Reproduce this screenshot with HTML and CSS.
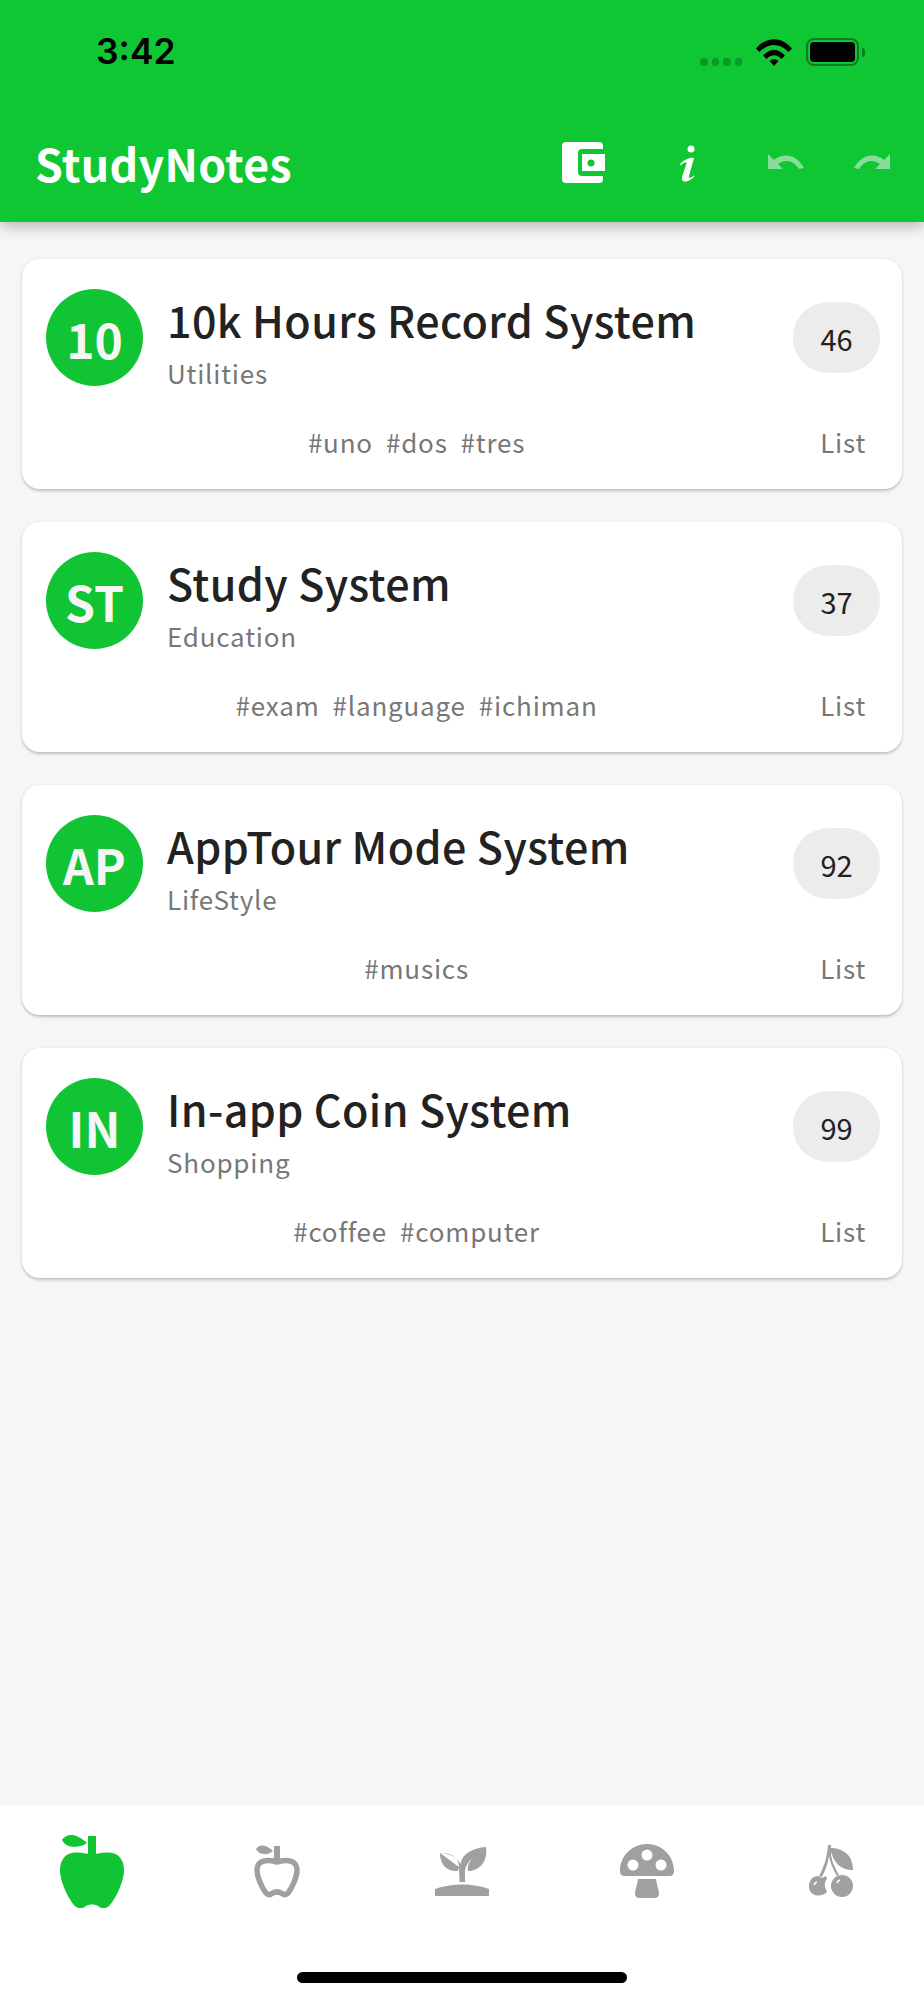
FILE: index.html
```html
<!DOCTYPE html>
<html lang="en">
<head>
<meta charset="utf-8">
<title>StudyNotes</title>
<link rel="stylesheet" href="styles.css">
</head>
<body>
<div class="app">
  <header class="header">
    <div class="status">
      <span class="time">3:42</span>
      <div class="status-icons">
        <div class="signal"><i></i><i></i><i></i><i></i></div>
        <svg class="wifi" viewBox="0 0 36 27"><path d="M0 9.5 C10 -3 26 -3 36 9.5 L32.5 13 C24 3.5 12 3.5 3.5 13Z M7 16.5 C13 9 23 9 29 16.5 L25.5 20 C21 15 15 15 10.5 20Z M13.5 22 C16 19.5 20 19.5 22.5 22 L18 27Z"/></svg>
        <div class="battery"><div class="battery-fill"></div></div>
        <div class="battery-tip"></div>
      </div>
    </div>
    <div class="toolbar">
      <h1 class="brand">StudyNotes</h1>
      <div class="tools">
        <svg class="tool-wallet" viewBox="0 0 43 41"><rect width="41" height="41" rx="4" fill="#fff"/><path d="M20 7 H43 V34 H20 a4 4 0 0 1 -4 -4 V11 a4 4 0 0 1 4 -4Z" fill="#0fc733"/><rect x="20" y="12" width="23" height="17" fill="#fff"/><circle cx="29" cy="21" r="3.5" fill="#0fc733"/></svg>
        <svg class="tool-info" viewBox="0 0 16 37"><circle cx="11" cy="4" r="3.5" fill="#fff"/><path d="M0 19 C4 15 10 12 14 13 L9 31 C8.500 33 9.500 33.500 11 32.500 L14 30.500 L14.500 31.500 C11 35 7 37 4.500 36.500 C1.500 36 1.500 33.500 2.500 30.500 L6.500 18.500 C7 16.500 5 17 .5 20.500Z" fill="#fff"/></svg>
        <svg class="tool-arrow" viewBox="0 0 36 15"><path d="M0 0 L6 6 C14 -1 28 -1 36 14 L31 15 C25 6 17 5 10 10 L15 15 L0 15Z"/></svg>
        <svg class="tool-arrow tool-redo" viewBox="0 0 36 15"><path d="M0 0 L6 6 C14 -1 28 -1 36 14 L31 15 C25 6 17 5 10 10 L15 15 L0 15Z"/></svg>
      </div>
    </div>
  </header>

  <main class="list">
    <article class="card">
      <div class="card-top">
        <div class="avatar">10</div>
        <div class="titles"><h2 class="title">10k Hours Record System</h2><p class="sub">Utilities</p></div>
        <div class="badge">46</div>
      </div>
      <div class="card-bottom">
        <div class="tags"><span>#uno</span><span>#dos</span><span>#tres</span></div>
        <span class="kind">List</span>
      </div>
    </article>
    <article class="card">
      <div class="card-top">
        <div class="avatar">ST</div>
        <div class="titles"><h2 class="title">Study System</h2><p class="sub">Education</p></div>
        <div class="badge">37</div>
      </div>
      <div class="card-bottom">
        <div class="tags"><span>#exam</span><span>#language</span><span>#ichiman</span></div>
        <span class="kind">List</span>
      </div>
    </article>
    <article class="card">
      <div class="card-top">
        <div class="avatar">AP</div>
        <div class="titles"><h2 class="title">AppTour Mode System</h2><p class="sub">LifeStyle</p></div>
        <div class="badge">92</div>
      </div>
      <div class="card-bottom">
        <div class="tags"><span>#musics</span></div>
        <span class="kind">List</span>
      </div>
    </article>
    <article class="card">
      <div class="card-top">
        <div class="avatar">IN</div>
        <div class="titles"><h2 class="title">In-app Coin System</h2><p class="sub">Shopping</p></div>
        <div class="badge">99</div>
      </div>
      <div class="card-bottom">
        <div class="tags"><span>#coffee</span><span>#computer</span></div>
        <span class="kind">List</span>
      </div>
    </article>
  </main>

  <footer class="tabbar">
    <nav class="tabs">
      <div class="tab">
        <svg class="ic-apple" viewBox="0 0 64 74"><path class="active" d="M32 21 C38 19 46 18 52 19 C60 20 64 28 64 36 C64 48 55 66 49 72 C46 75 41 75 38 72 C35 70 29 70 26 72 C23 75 18 75 15 72 C9 66 0 48 0 36 C0 28 4 20 12 19 C18 18 26 19 32 21Z M28 2 H36 V22 H28Z M2 6 C7 -1 16 -1 27 9 C18 15 6 14 2 6Z"/></svg>
      </div>
      <div class="tab">
        <svg class="ic-apple-line" viewBox="0 0 46 53"><path class="line" d="M23 17 C27 16 32 15 36 16 C41 17 43 21 43 25 C43 32 38 43 34 48 C32 50 30 50 28 48.500 C25 46.500 21 46.500 18 48.500 C16 50 14 50 12 48 C8 43 3 32 3 25 C3 21 5 17 10 16 C14 15 19 16 23 17Z"/><path class="fill" d="M20 1 H26 V17 H20Z M2 4 C5 -1 12 -1 19 6 C13 11 5 10 2 4Z"/></svg>
      </div>
      <div class="tab">
        <svg class="ic-sprout" viewBox="0 0 54 49"><path class="fill" d="M0 49 V42 C16 36 38 36 54 42 V49Z M5 6 C16 5 24 11 24 20 L24.500 35 H30 L30 24 C31 18 34 14 38 11 C34 15 32 19 33 24 C45 24 53 14 51 0 C37 1 27 7 25.500 17 C22 11 15 6 5 6Z M5 6 C5 18 12 25 23 24 L24 20Z"/></svg>
      </div>
      <div class="tab">
        <svg class="ic-mushroom" viewBox="0 0 54 54"><path class="fill" d="M0 27 C0 12 12 0 27 0 C42 0 54 12 54 27 V28 C54 30 52 32 50 32 H4 C2 32 0 30 0 28Z M18 35 H36 C37 42 39 46 39 50 C39 52 37 54 35 54 H19 C17 54 15 52 15 50 C15 46 17 42 18 35Z"/><circle class="hole" cx="27" cy="11" r="5.500"/><circle class="hole" cx="13" cy="21" r="5.500"/><circle class="hole" cx="41" cy="21" r="5.500"/></svg>
      </div>
      <div class="tab">
        <svg class="ic-cherry" viewBox="0 0 44 52"><path class="fill" d="M19 0 H22 L22 4 C21 14 26 23 30 30 L28 31 C24 24 21 18 20 11 C19 19 16 25 13 32 L10 31 C14 24 18 14 19 0Z M21 3 C32 3 44 8 44 25 C32 25 24 18 21 3Z"/><circle class="fill" cx="33" cy="41" r="11"/><path class="fill" d="M9 31 L13 33 L17 31 L18 34 C15 37 15 41 18 47 C14 52 0 53 0 41 C0 35 4 31 9 31Z"/><path class="hole-line" d="M28 38 C28.500 36.500 29.500 35.500 31 35"/><path class="hole-line" d="M5 40 C5.500 38.500 6.500 37.500 8 37"/></svg>
      </div>
    </nav>
    <div class="home-row"><div class="home"></div></div>
  </footer>
</div>
</body>
</html>
```
FILE: styles.css
```css
* { box-sizing: border-box; }
html, body { margin: 0; padding: 0; }
body { width: 924px; height: 2000px; overflow: hidden; background: #f6f6f6; font-family: "Noto Sans CJK SC", "Noto Sans", sans-serif; }
svg { display: block; }
h1, h2, p { margin: 0; }

.app { display: flex; flex-direction: column; height: 2000px; }

.header { height: 222px; background: #0fc733; box-shadow: 0 4px 14px rgba(0,0,0,.28); position: relative; z-index: 1; flex: none; }
.status { height: 100px; display: flex; align-items: flex-start; justify-content: space-between; }
.time { font-family: Inter, sans-serif; font-weight: 600; font-size: 35.500px; line-height: 44px; color: #000; margin: 30px 0 0 96px; }
.status-icons { display: flex; align-items: flex-start; margin: 38px 59px 0 0; }
.signal { display: flex; gap: 4px; margin: 20px 14px 0 0; }
.signal i { width: 7.500px; height: 8px; border-radius: 3px; background: #0a9a27; }
.wifi { width: 36px; height: 27px; fill: #000; margin: 1px 14px 0 0; }
.battery { width: 53px; height: 28px; border: 2px solid #0a7d22; border-radius: 8px; padding: 2px; }
.battery-fill { width: 100%; height: 100%; background: #000; border-radius: 4px; }
.battery-tip { width: 3px; height: 9px; margin: 10px 0 0 3px; background: #0a7d22; border-radius: 0 3px 3px 0; }

.toolbar { height: 122px; display: flex; align-items: flex-start; justify-content: space-between; }
.brand { font-size: 44.600px; font-weight: 700; letter-spacing: .3px; line-height: 64px; color: #fff; margin: 31px 0 0 35px; }
.tools { display: flex; align-items: flex-start; }
.tool-wallet { width: 43px; height: 41px; margin: 42px 75px 0 0; }
.tool-info { width: 16px; height: 37px; margin: 45px 72px 0 0; }
.tool-arrow { width: 36px; height: 15px; margin: 54px 0 0 0; fill: #87dd99; }
.tool-redo { transform: scaleX(-1); margin: 54px 34px 0 50px; }

.list { flex: 1; padding: 37px 22px 0; display: flex; flex-direction: column; gap: 33px; }
.card { height: 230px; background: #fff; border-radius: 18px; box-shadow: 0 1.500px 3px rgba(0,0,0,.22); padding: 30px 22px 0 24px; display: flex; flex-direction: column; }
.card-top { display: flex; align-items: flex-start; }
.avatar { width: 97px; height: 97px; border-radius: 50%; background: #10c434; color: #f6f6f6; font-size: 48px; font-weight: 700; display: flex; align-items: center; justify-content: center; flex: none; line-height: 1; }
.titles { flex: 1; margin-left: 24px; }
.title { font-size: 43px; letter-spacing: .4px; font-weight: 500; line-height: 60px; color: #222; margin-top: 0; }
.sub { font-size: 26px; font-weight: 400; line-height: 38px; letter-spacing: .8px; color: #777; margin-top: 5px; }
.badge { width: 87px; height: 71px; margin-top: 13px; border-radius: 35px; background: #ececec; color: #222; font-size: 29px; line-height: 72px; text-align: center; flex: none; }
.card-bottom { display: flex; align-items: center; margin-top: 31px; padding-right: 14px; }
.tags { flex: 1; display: flex; justify-content: center; gap: 13px; font-size: 26px; line-height: 38px; letter-spacing: .8px; color: #777; margin-right: 33px; }
.kind { font-size: 26px; line-height: 38px; letter-spacing: .8px; color: #777; }

.tabbar { height: 195px; background: #fff; flex: none; }
.tabs { height: 132px; display: grid; grid-template-columns: repeat(5, 1fr); align-items: center; justify-items: center; }
.home-row { display: flex; justify-content: center; padding-top: 35px; }
.home { width: 330px; height: 11px; border-radius: 6px; background: #000; }
.ic-apple { width: 64px; height: 74px; }
.ic-apple-line { width: 46px; height: 53px; }
.ic-sprout { width: 54px; height: 49px; }
.ic-mushroom { width: 54px; height: 54px; }
.ic-cherry { width: 44px; height: 52px; margin-right: 2px; }
.active { fill: #10c434; }
.fill { fill: #a0a0a0; }
.line { fill: none; stroke: #a0a0a0; stroke-width: 5.500px; }
.hole { fill: #fff; }
.hole-line { fill: none; stroke: #fff; stroke-width: 1.500px; }
```
